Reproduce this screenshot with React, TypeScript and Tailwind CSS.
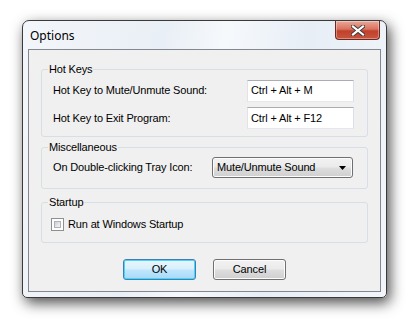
const ui = { fontFamily: '"Liberation Sans", Arial, sans-serif' }

function CloseButton() {
  return (
    <div className="absolute right-[6px] top-0 flex h-[19px] w-[45px] items-center justify-center rounded-b-[4px] border border-t-0 border-[#6b2a1f] bg-[linear-gradient(#e9a999_0%,#d9735f_45%,#c0412b_55%,#c9543c_100%)] shadow-[inset_0_0_0_1px_rgba(255,255,255,0.35)]">
      <svg width="14" height="11" viewBox="0 0 14 11">
        <path d="M2 1.5 L12 9.5 M12 1.5 L2 9.5" stroke="#3b3b3b" strokeWidth="4" strokeLinecap="square" />
        <path d="M2 1.5 L12 9.5 M12 1.5 L2 9.5" stroke="#ffffff" strokeWidth="2.2" strokeLinecap="square" />
      </svg>
    </div>
  )
}

function GroupBox({ title, className, children }: { title: string; className: string; children: React.ReactNode }) {
  return (
    <fieldset className={`mx-[12px] rounded-[3px] border border-[#d5dfe5] ${className}`}>
      <legend className="ml-[6px] px-[1px] text-[11px] leading-[13px] text-black">{title}</legend>
      {children}
    </fieldset>
  )
}

function TextBox({ value }: { value: string }) {
  return (
    <div className="flex h-[22px] w-[107px] items-center border border-[#abadb3] border-l-[#e2e3ea] border-r-[#dbdfe6] border-b-[#e3e9ef] bg-white pl-[3px] text-[11px] text-black">
      {value}
    </div>
  )
}

function Button({ label, primary }: { label: string; primary?: boolean }) {
  return (
    <div
      className={
        primary
          ? 'flex h-[21px] w-[73px] items-center justify-center rounded-[3px] border border-[#3c7fb1] bg-[linear-gradient(#eaf6fd_0%,#d9f0fc_45%,#bee6fd_55%,#a7d9f5_100%)] text-[11px] text-black shadow-[inset_0_0_0_1px_#48d4fd]'
          : 'flex h-[21px] w-[73px] items-center justify-center rounded-[3px] border border-[#707070] bg-[linear-gradient(#f2f2f2_0%,#ebebeb_45%,#dddddd_55%,#cfcfcf_100%)] text-[11px] text-black shadow-[inset_0_0_0_1px_#fcfcfc]'
      }
    >
      {label}
    </div>
  )
}

export default function App() {
  return (
    <div className="h-[324px] w-[412px] overflow-hidden bg-white pl-[22px] pt-[20px] tracking-[-0.15px]" style={ui}>
      <div className="relative h-[278px] w-[365px] rounded-t-[7px] rounded-b-[5px] border border-[#3a3a3a] bg-[linear-gradient(100deg,#f3f6fa_0%,#e9eff6_35%,#f6f9fc_50%,#e7eef6_70%,#f2f6fa_100%)] px-[5px] shadow-[3px_5px_14px_rgba(0,0,0,0.7)]">
        <div className="flex h-[28px] items-center pl-[2px] pt-[2px]">
          <span className="text-[12px] text-black tracking-normal" style={{ fontFamily: '"Noto Sans", "Open Sans", sans-serif' }}>
            Options
          </span>
        </div>
        <CloseButton />
        <div className="flex h-[243px] flex-col border border-[#828790] bg-[#f0f0f0] pt-[13px]">
          <GroupBox title="Hot Keys" className="h-[74px] pb-0">
            <div className="flex h-[28px] items-center justify-between pl-[11px] pr-[13px] pt-[1px] text-[11px] text-black">
              <span>Hot Key to Mute/Unmute Sound:</span>
              <TextBox value="Ctrl + Alt + M" />
            </div>
            <div className="flex h-[28px] items-center justify-between pl-[11px] pr-[13px] text-[11px] text-black">
              <span>Hot Key to Exit Program:</span>
              <TextBox value="Ctrl + Alt + F12" />
            </div>
          </GroupBox>
          <GroupBox title="Miscellaneous" className="mt-[4px] h-[48px]">
            <div className="flex items-center justify-between pl-[11px] pr-[14px] pt-[3px] text-[11px] text-black">
              <span>On Double-clicking Tray Icon:</span>
              <div className="flex h-[21px] w-[141px] items-center justify-between rounded-[3px] border border-[#707070] bg-[linear-gradient(#f2f2f2_0%,#ebebeb_45%,#dddddd_55%,#cfcfcf_100%)] pl-[4px] pr-[6px] shadow-[inset_0_0_0_1px_#fcfcfc]">
                <span>Mute/Unmute Sound</span>
                <svg width="7" height="4" viewBox="0 0 7 4">
                  <path d="M0 0 H7 L3.5 4 Z" fill="#000" />
                </svg>
              </div>
            </div>
          </GroupBox>
          <GroupBox title="Startup" className="mt-[7px] h-[47px]">
            <div className="flex items-center gap-[4px] pl-[9px] pt-[7px] text-[11px] text-black">
              <div className="h-[13px] w-[13px] border border-[#8e8f8f] bg-white p-[2px]">
                <div className="h-full w-full border border-[#aeb3b9] bg-[linear-gradient(135deg,#cbcfd5,#f6f6f6)]" />
              </div>
              <span>Run at Windows Startup</span>
            </div>
          </GroupBox>
          <div className="mt-[16px] flex justify-center gap-[17px]">
            <Button label="OK" primary />
            <Button label="Cancel" />
          </div>
        </div>
      </div>
    </div>
  )
}
